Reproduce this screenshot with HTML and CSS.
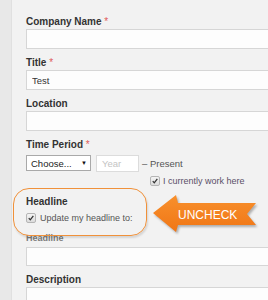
FILE: index.html
```html
<!DOCTYPE html>
<html>
<head>
<meta charset="utf-8">
<link rel="stylesheet" href="styles.css">
</head>
<body>
<div class="page">
  <div class="strip"></div>
  <div class="panel">
    <div class="field">
      <label class="lbl">Company Name <span class="req">*</span></label>
      <input class="inp" type="text">
    </div>
    <div class="field">
      <label class="lbl">Title <span class="req">*</span></label>
      <input class="inp" type="text" value="Test">
    </div>
    <div class="field">
      <label class="lbl">Location</label>
      <input class="inp" type="text">
    </div>
    <div class="field period">
      <label class="lbl">Time Period <span class="req">*</span></label>
      <div class="row">
        <div class="select"><span>Choose...</span><span class="caret">&#9660;</span></div>
        <div class="year">Year</div>
        <span class="present">– Present</span>
      </div>
      <div class="current">
        <span class="cb"><svg viewBox="0 0 10 10" width="10" height="10"><path d="M2.2 5.2 L4.1 7.3 L7.9 2.3" fill="none" stroke="#333" stroke-width="1.6"/></svg></span>
        <span class="cur-text">I currently work here</span>
      </div>
    </div>
    <div class="headline-sec">
      <div class="lbl">Headline</div>
      <div class="cbrow">
        <span class="cb"><svg viewBox="0 0 10 10" width="10" height="10"><path d="M2.2 5.2 L4.1 7.3 L7.9 2.3" fill="none" stroke="#333" stroke-width="1.6"/></svg></span>
        <span class="upd">Update my headline to:</span>
      </div>
    </div>
    <div class="field sub-field">
      <label class="sub">Headline</label>
      <input class="inp hl" type="text">
    </div>
    <div class="field">
      <label class="lbl">Description</label>
      <div class="inp tall"></div>
    </div>
  </div>
  <div class="callout"></div>
  <svg class="arrow" width="114" height="48" viewBox="0 0 114 48">
    <defs>
      <linearGradient id="g" x1="0" y1="0" x2="0" y2="1">
        <stop offset="0" stop-color="#f8902c"/>
        <stop offset="1" stop-color="#f07616"/>
      </linearGradient>
      <filter id="b" x="-10%" y="-10%" width="130%" height="140%">
        <feGaussianBlur stdDeviation="1.2"/>
      </filter>
    </defs>
    <polygon points="3,21 26,3 28,11 106,11 97,22 106,33 28,33 26,40" transform="translate(1.5,2)" fill="rgba(0,0,0,0.28)" filter="url(#b)"/>
    <polygon points="3,21 26,3 28,11 106,11 97,22 106,33 28,33 26,40" fill="url(#g)"/>
    <text x="28" y="26.5" class="arrow-text">UNCHECK</text>
  </svg>
</div>
</body>
</html>
```

FILE: styles.css
```css
html, body {
  margin: 0;
  padding: 0;
}
body {
  width: 268px;
  height: 300px;
  overflow: hidden;
  font-family: "Liberation Sans", Arial, sans-serif;
  color: #333;
}
.page {
  position: relative;
  display: flex;
  width: 268px;
  height: 300px;
  overflow: hidden;
  background: #f2f2f2;
}
.strip {
  width: 11px;
  flex: none;
  background: #e8e8e8;
  border-right: 1px solid #e0e0e0;
}
.panel {
  flex: 1;
  padding: 16px 0 0 14px;
  display: flex;
  flex-direction: column;
}
.field {
  display: flex;
  flex-direction: column;
  margin-bottom: 8px;
}
.lbl {
  display: block;
  font-size: 10px;
  font-weight: bold;
  line-height: 11px;
  color: #333;
}
.req {
  color: #e05a5a;
  font-weight: normal;
}
.inp {
  box-sizing: border-box;
  display: block;
  margin: 2px 0 0 0;
  width: 300px;
  height: 20px;
  padding: 0 5px;
  border: 1px solid #d6d6d6;
  background: #fdfdfd;
  font-family: "Liberation Sans", Arial, sans-serif;
  font-size: 9.5px;
  color: #333;
  outline: none;
}
.period {
  margin-bottom: 0;
}
.row {
  display: flex;
  align-items: center;
  margin-top: 5px;
  height: 16px;
}
.select {
  box-sizing: border-box;
  width: 65px;
  height: 16px;
  border: 1px solid #a9a9a9;
  background: #fff;
  display: flex;
  align-items: center;
  justify-content: space-between;
  padding: 0 3px 0 4px;
  font-size: 9.5px;
  color: #222;
}
.caret {
  font-size: 6px;
  color: #111;
}
.year {
  box-sizing: border-box;
  width: 43px;
  height: 17px;
  margin-left: 5px;
  border: 1px solid #dcdcdc;
  background: #fff;
  font-size: 9.5px;
  color: #c4c4c4;
  display: flex;
  align-items: center;
  padding-left: 5px;
}
.present {
  margin-left: 3px;
  font-size: 9.5px;
  color: #555;
}
.current {
  display: flex;
  align-items: center;
  margin: 5px 0 0 124px;
  height: 10px;
}
.cb {
  box-sizing: border-box;
  width: 10px;
  height: 10px;
  flex: none;
  border: 1px solid #b5b5b5;
  border-radius: 2px;
  background: linear-gradient(#f4f4f4, #dcdcdc);
  display: flex;
  align-items: center;
  justify-content: center;
}
.cb svg {
  display: block;
  width: 8px;
  height: 8px;
}
.cur-text {
  margin-left: 3px;
  font-size: 9px;
  color: #5b5068;
}
.headline-sec {
  margin-top: 10px;
}
.cbrow {
  display: flex;
  align-items: center;
  margin-top: 6px;
  height: 10px;
}
.upd {
  margin-left: 4px;
  font-size: 9px;
  color: #555;
}
.sub-field {
  margin-top: 10px;
}
.sub {
  display: block;
  font-size: 9px;
  font-weight: bold;
  line-height: 11px;
  color: #7a7a7a;
}
.inp.hl {
  margin-top: 3px;
  height: 19px;
}
.inp.tall {
  height: 30px;
}
.callout {
  position: absolute;
  left: 13px;
  top: 188px;
  width: 134px;
  height: 48px;
  box-sizing: border-box;
  border: 1.5px solid #f0913a;
  border-radius: 16px;
  box-shadow: 1px 2px 2px rgba(0, 0, 0, 0.12);
}
.arrow {
  position: absolute;
  left: 150px;
  top: 192px;
  overflow: visible;
}
.arrow-text {
  font-family: "Liberation Sans", Arial, sans-serif;
  font-size: 12px;
  fill: #fff;
}
```
